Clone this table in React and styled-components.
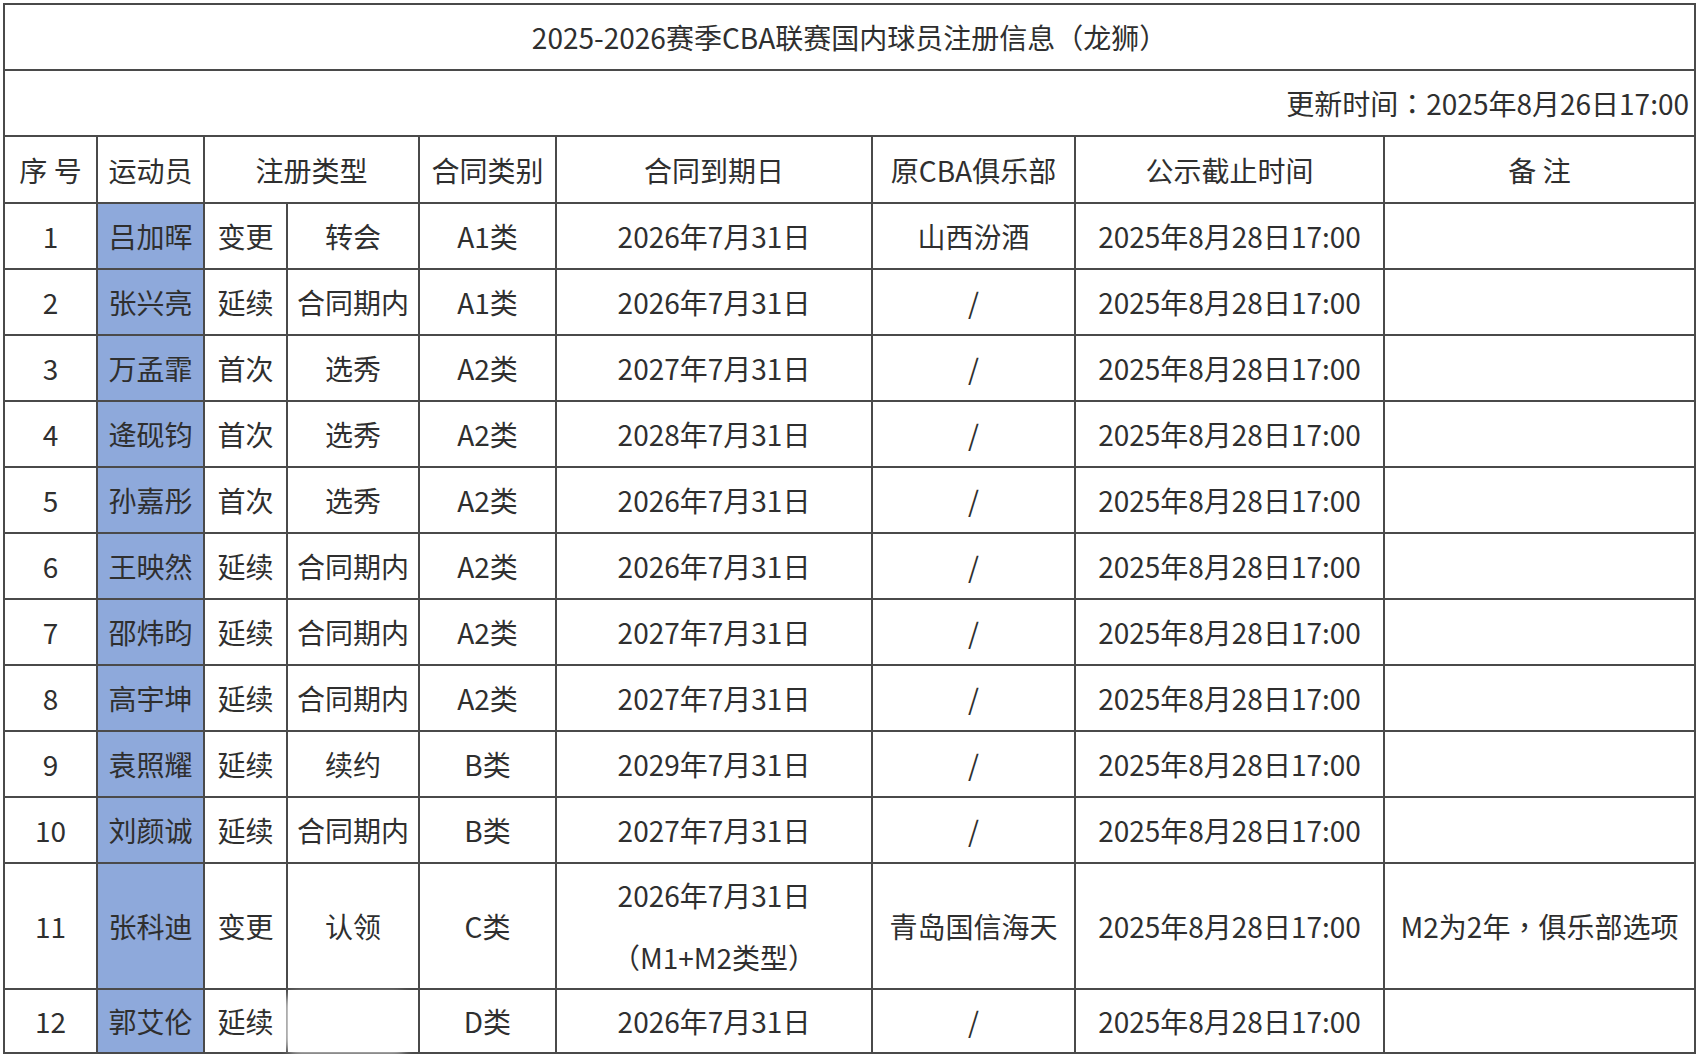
import React from 'react';
import styled, { createGlobalStyle } from 'styled-components';

const GlobalStyle = createGlobalStyle`
  html, body {
    margin: 0;
    padding: 0;
    background: #ffffff;
  }
  body {
    font-family: "Noto Sans CJK SC", "Noto Sans", "Liberation Sans", sans-serif;
    color: #333333;
  }
`;

const Page = styled.div`
  padding: 3px 0 0 3px;
  width: 1691px;
  position: relative;
`;

const Sheet = styled.table`
  width: 1691px;
  table-layout: fixed;
  border-collapse: collapse;
  border: 2px solid #4a4a4a;
  font-size: 28px;
  line-height: 62px;
  color: #2f2f2f;
`;

const Cell = styled.td`
  border: 2px solid #4a4a4a;
  padding: 0;
  text-align: ${props => props.align || 'center'};
  padding-right: ${props => (props.align === 'right' ? '5px' : '0')};
  vertical-align: middle;
  white-space: nowrap;
  overflow: hidden;
  background: ${props => (props.highlight ? '#8ea9db' : '#ffffff')};
  font-weight: 400;
`;

const Row = styled.tr`
  height: ${props => props.h || 66}px;
`;

// full-width punctuation sits centred in its box, as in the source sheet
const Punct = styled.span`
  font-family: "Noto Sans CJK TC", "Noto Sans CJK SC", sans-serif;
`;

const Blur = styled.div`
  position: absolute;
  left: 292px;
  top: 1000px;
  width: 110px;
  height: 46px;
  background: #ffffff;
  box-shadow: 0 0 8px 6px #ffffff;
  border-radius: 6px;
`;

const columns = [93, 107, 83, 132, 137, 316, 203, 309, 311];

const players = [
  { no: 1, name: '吕加晖', kind: '变更', sub: '转会', cls: 'A1类', end: ['2026年7月31日'], club: '山西汾酒' },
  { no: 2, name: '张兴亮', kind: '延续', sub: '合同期内', cls: 'A1类', end: ['2026年7月31日'], club: '/' },
  { no: 3, name: '万孟霏', kind: '首次', sub: '选秀', cls: 'A2类', end: ['2027年7月31日'], club: '/' },
  { no: 4, name: '逄砚钧', kind: '首次', sub: '选秀', cls: 'A2类', end: ['2028年7月31日'], club: '/' },
  { no: 5, name: '孙嘉彤', kind: '首次', sub: '选秀', cls: 'A2类', end: ['2026年7月31日'], club: '/' },
  { no: 6, name: '王映然', kind: '延续', sub: '合同期内', cls: 'A2类', end: ['2026年7月31日'], club: '/' },
  { no: 7, name: '邵炜昀', kind: '延续', sub: '合同期内', cls: 'A2类', end: ['2027年7月31日'], club: '/' },
  { no: 8, name: '高宇坤', kind: '延续', sub: '合同期内', cls: 'A2类', end: ['2027年7月31日'], club: '/' },
  { no: 9, name: '袁照耀', kind: '延续', sub: '续约', cls: 'B类', end: ['2029年7月31日'], club: '/' },
  { no: 10, name: '刘颜诚', kind: '延续', sub: '合同期内', cls: 'B类', end: ['2027年7月31日'], club: '/' },
  {
    no: 11, name: '张科迪', kind: '变更', sub: '认领', cls: 'C类',
    end: ['2026年7月31日', '（M1+M2类型）'], club: '青岛国信海天',
    note: <>M2为2年<Punct>，</Punct>俱乐部选项</>, h: 126,
  },
  { no: 12, name: '郭艾伦', kind: '延续', sub: '', cls: 'D类', end: ['2026年7月31日'], club: '/', h: 64 },
];

const DEADLINE = '2025年8月28日17:00';

const App = () => {
  return (
    <Page>
      <GlobalStyle />
      <Sheet>
        <colgroup>
          {columns.map((w, i) => (
            <col key={i} style={{ width: w }} />
          ))}
        </colgroup>
        <tbody>
          <Row h={66}>
            <Cell colSpan={9}>2025-2026赛季CBA联赛国内球员注册信息（龙狮）</Cell>
          </Row>
          <Row h={66}>
            <Cell colSpan={9} align="right">
              更新时间<Punct>：</Punct>2025年8月26日17:00
            </Cell>
          </Row>
          <Row h={67}>
            <Cell>序 号</Cell>
            <Cell>运动员</Cell>
            <Cell colSpan={2}>注册类型</Cell>
            <Cell>合同类别</Cell>
            <Cell>合同到期日</Cell>
            <Cell>原CBA俱乐部</Cell>
            <Cell>公示截止时间</Cell>
            <Cell>备 注</Cell>
          </Row>
          {players.map((p) => (
            <Row key={p.no} h={p.h}>
              <Cell>{p.no}</Cell>
              <Cell highlight>{p.name}</Cell>
              <Cell>{p.kind}</Cell>
              <Cell>{p.sub}</Cell>
              <Cell>{p.cls}</Cell>
              <Cell>
                {p.end.map((line, i) => (
                  <div key={i}>{line}</div>
                ))}
              </Cell>
              <Cell>{p.club}</Cell>
              <Cell>{DEADLINE}</Cell>
              <Cell>{p.note || ''}</Cell>
            </Row>
          ))}
        </tbody>
      </Sheet>
      <Blur />
    </Page>
  );
};

export default App;
